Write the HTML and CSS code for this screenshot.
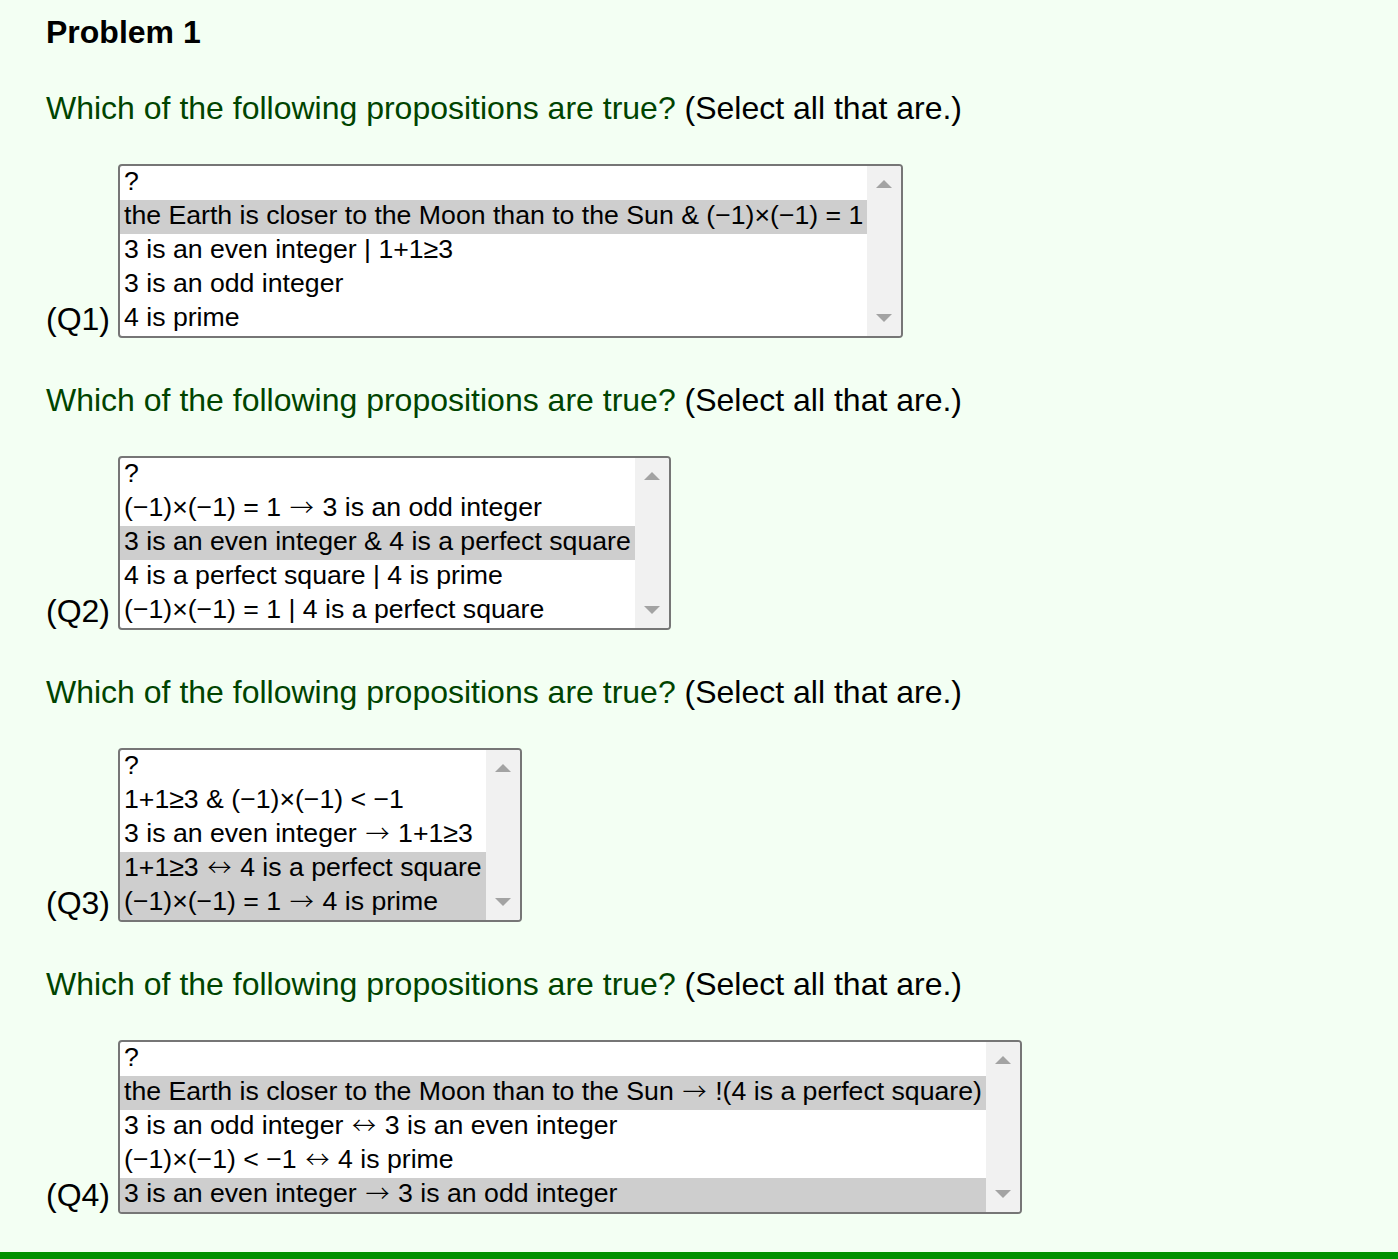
FILE: index.html
```html
<!DOCTYPE html>
<html lang="en">
<head>
<meta charset="utf-8">
<title>Problem 1</title>
<link rel="stylesheet" href="styles.css">
</head>
<body>
<div class="page">
  <div class="title">Problem 1</div>

  <div class="block first">
    <div class="question"><span class="green">Which of the following propositions are true?</span> (Select all that are.)</div>
    <div class="row">
      <span class="label">(Q1)</span>
      <div class="listbox" role="listbox" aria-multiselectable="true">
        <div class="options">
          <div class="opt">?</div>
          <div class="opt sel">the Earth is closer to the Moon than to the Sun &amp; (−1)×(−1) = 1</div>
          <div class="opt">3 is an even integer | 1+1≥3</div>
          <div class="opt">3 is an odd integer</div>
          <div class="opt">4 is prime</div>
        </div>
        <div class="scroll">
          <svg width="16" height="8" viewBox="0 0 16 8"><path d="M0 8 L8 0 L16 8 Z" fill="#a3a3a3"/></svg>
          <svg width="16" height="8" viewBox="0 0 16 8"><path d="M0 0 L16 0 L8 8 Z" fill="#a3a3a3"/></svg>
        </div>
      </div>
    </div>
  </div>

  <div class="block">
    <div class="question"><span class="green">Which of the following propositions are true?</span> (Select all that are.)</div>
    <div class="row">
      <span class="label">(Q2)</span>
      <div class="listbox" role="listbox" aria-multiselectable="true">
        <div class="options">
          <div class="opt">?</div>
          <div class="opt">(−1)×(−1) = 1 <span class="sym">→</span> 3 is an odd integer</div>
          <div class="opt sel">3 is an even integer &amp; 4 is a perfect square</div>
          <div class="opt">4 is a perfect square | 4 is prime</div>
          <div class="opt">(−1)×(−1) = 1 | 4 is a perfect square</div>
        </div>
        <div class="scroll">
          <svg width="16" height="8" viewBox="0 0 16 8"><path d="M0 8 L8 0 L16 8 Z" fill="#a3a3a3"/></svg>
          <svg width="16" height="8" viewBox="0 0 16 8"><path d="M0 0 L16 0 L8 8 Z" fill="#a3a3a3"/></svg>
        </div>
      </div>
    </div>
  </div>

  <div class="block">
    <div class="question"><span class="green">Which of the following propositions are true?</span> (Select all that are.)</div>
    <div class="row">
      <span class="label">(Q3)</span>
      <div class="listbox" role="listbox" aria-multiselectable="true">
        <div class="options">
          <div class="opt">?</div>
          <div class="opt">1+1≥3 &amp; (−1)×(−1) &lt; −1</div>
          <div class="opt">3 is an even integer <span class="sym">→</span> 1+1≥3</div>
          <div class="opt sel">1+1≥3 <span class="sym">↔</span> 4 is a perfect square</div>
          <div class="opt sel">(−1)×(−1) = 1 <span class="sym">→</span> 4 is prime</div>
        </div>
        <div class="scroll">
          <svg width="16" height="8" viewBox="0 0 16 8"><path d="M0 8 L8 0 L16 8 Z" fill="#a3a3a3"/></svg>
          <svg width="16" height="8" viewBox="0 0 16 8"><path d="M0 0 L16 0 L8 8 Z" fill="#a3a3a3"/></svg>
        </div>
      </div>
    </div>
  </div>

  <div class="block">
    <div class="question"><span class="green">Which of the following propositions are true?</span> (Select all that are.)</div>
    <div class="row">
      <span class="label">(Q4)</span>
      <div class="listbox" role="listbox" aria-multiselectable="true">
        <div class="options">
          <div class="opt">?</div>
          <div class="opt sel">the Earth is closer to the Moon than to the Sun <span class="sym">→</span> !(4 is a perfect square)</div>
          <div class="opt">3 is an odd integer <span class="sym">↔</span> 3 is an even integer</div>
          <div class="opt">(−1)×(−1) &lt; −1 <span class="sym">↔</span> 4 is prime</div>
          <div class="opt sel">3 is an even integer <span class="sym">→</span> 3 is an odd integer</div>
        </div>
        <div class="scroll">
          <svg width="16" height="8" viewBox="0 0 16 8"><path d="M0 8 L8 0 L16 8 Z" fill="#a3a3a3"/></svg>
          <svg width="16" height="8" viewBox="0 0 16 8"><path d="M0 0 L16 0 L8 8 Z" fill="#a3a3a3"/></svg>
        </div>
      </div>
    </div>
  </div>
</div>
<div class="rule"></div>
</body>
</html>
```

FILE: styles.css
```css
html, body {
  margin: 0;
  padding: 0;
  background: #f3fff3;
}

body {
  font-family: "Liberation Sans", Arial, sans-serif;
  color: #000;
}

.page {
  padding: 14px 0 0 46px;
}

.title {
  font-size: 32px;
  font-weight: 700;
  line-height: 37px;
}

.block {
  margin-top: 44px;
}

.block.first {
  margin-top: 39px;
}

.question {
  font-size: 32px;
  line-height: 37px;
  white-space: nowrap;
}

.green {
  color: #004400;
}

.row {
  display: flex;
  align-items: flex-end;
  gap: 8px;
  margin-top: 37px;
}

.label {
  font-size: 32px;
  line-height: 37px;
  white-space: nowrap;
}

.listbox {
  display: inline-flex;
  border: 2px solid #767676;
  border-radius: 4px;
  background: #fff;
  overflow: hidden;
}

.options {
  display: flex;
  flex-direction: column;
}

.opt {
  font-size: 26.67px;
  line-height: 30px;
  height: 34px;
  box-sizing: border-box;
  padding: 0 4px 4px 4px;
  white-space: nowrap;
  color: #000;
}

.opt.sel {
  background: #cecece;
}

.sym {
  font-family: "Noto Sans CJK SC", "DejaVu Sans", sans-serif;
  font-size: 24px;
  font-weight: 300;
  line-height: 0;
  display: inline-block;
  width: 26.67px;
  text-align: center;
  vertical-align: baseline;
}

.scroll {
  width: 34px;
  background: #f1f1f1;
  display: flex;
  flex-direction: column;
  justify-content: space-between;
  align-items: center;
  padding: 14px 0;
  box-sizing: border-box;
}

.scroll svg {
  display: block;
}

.rule {
  margin-top: 38px;
  height: 8px;
  background: #009000;
}
```
